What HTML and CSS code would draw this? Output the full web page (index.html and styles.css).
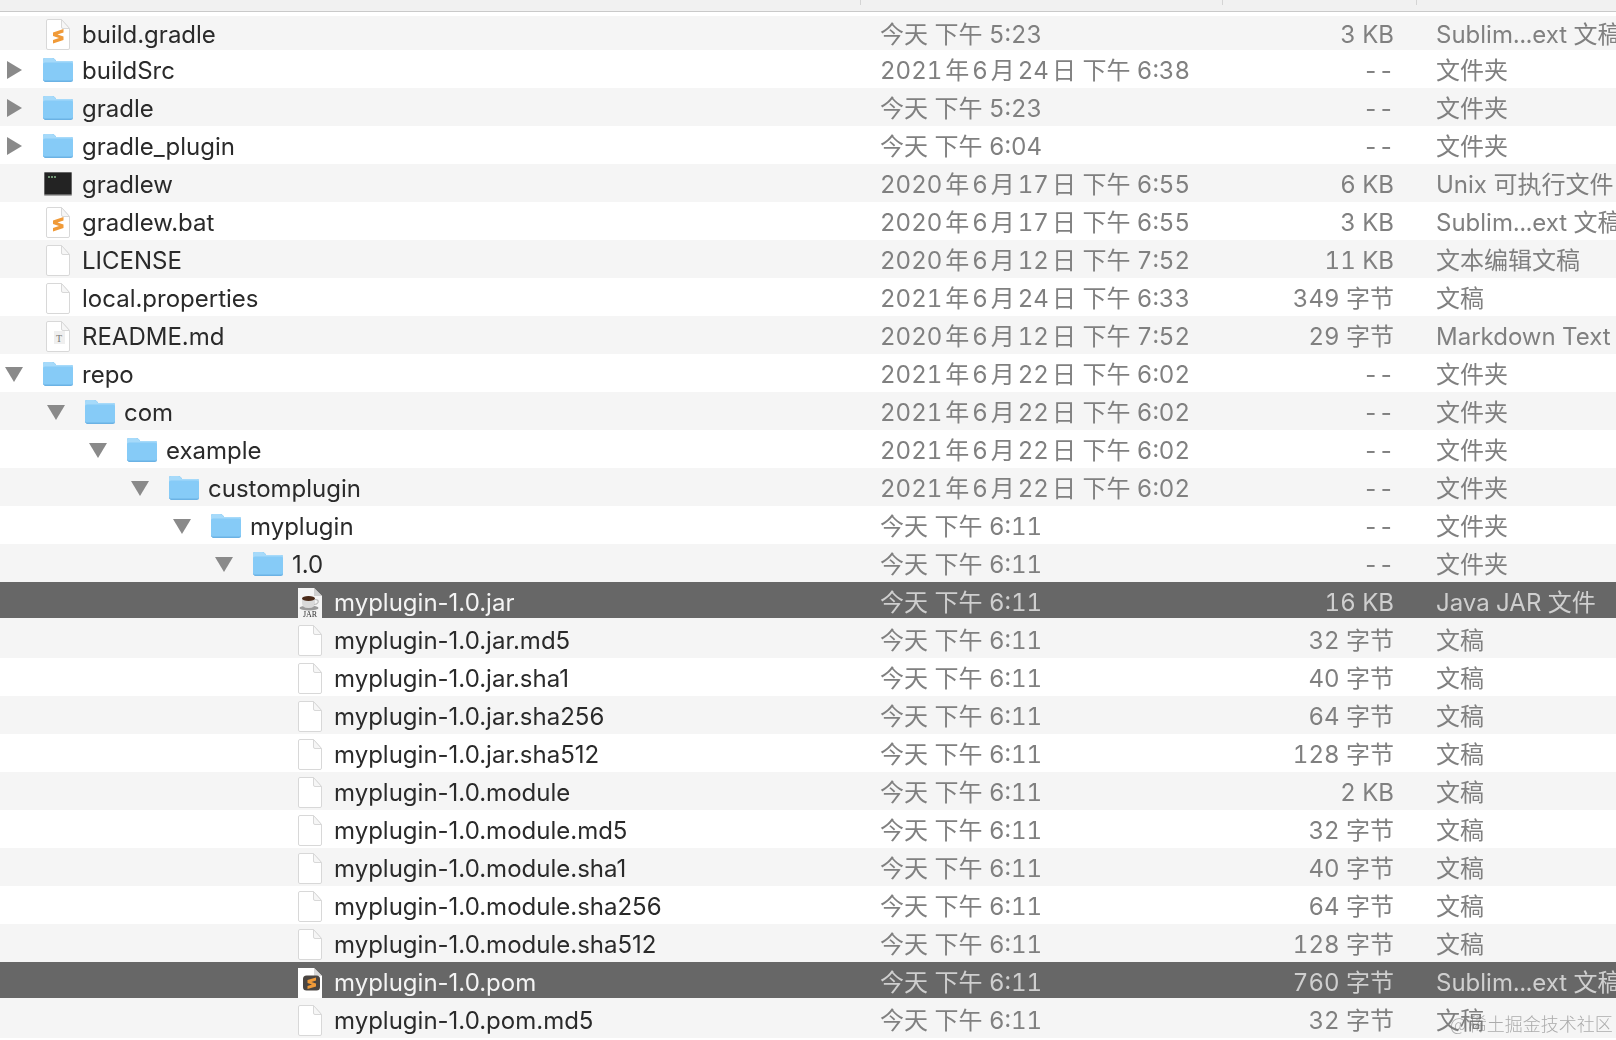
FILE: index.html
```html
<!DOCTYPE html>
<html lang="zh-CN">
<head>
    <meta charset="UTF-8">
    <meta name="viewport" content="width=device-width, initial-scale=1.0">
    <title>repo</title>
    <link rel="stylesheet" href="styles.css">
</head>
<body>
    <svg class="defs" width="0" height="0">
        <symbol id="i-folder" viewBox="0 0 30 24">
            <path d="M1 23 Q0 23 0 22 V2 Q0 0 2 0 H9 Q11 0 12 1.5 L13 3 H28 Q30 3 30 5 V22 Q30 24 28 24 H2 Q1 24 1 23Z" fill="#6bb2e4"/>
            <path d="M0 21 V2 Q0 0 2 0 H9 Q11 0 12 1.5 L13 3 H28 Q30 3 30 5 V21 Q30 22.5 28 22.5 H2 Q0 22.5 0 21Z" fill="#86cbf7"/>
            <path d="M0 6 Q0 4.5 2 4.5 H28 Q30 4.5 30 6 V5 Q30 3 28 3 H13 L12 1.5 Q11 0 9 0 H2 Q0 0 0 2Z" fill="#a6dafa"/>
        </symbol>
        <symbol id="i-file" viewBox="0 0 24 31">
            <path d="M.5 2 Q.5 .5 2 .5 H15.5 L23.5 9.5 V29 Q23.5 30.5 22 30.5 H2 Q.5 30.5 .5 29Z" fill="#fff" stroke="#d8d8d8"/>
            <path d="M15.5 .5 V8 Q15.5 9.5 17 9.5 H23.5Z" fill="#f6f6f6" stroke="#d8d8d8"/>
        </symbol>
        <symbol id="i-sublime" viewBox="0 0 24 31">
            <use href="#i-file"/>
            <path d="M7 13.5 L17.5 10 V13.5 L11.5 15.5 L17.5 17.5 V21 L7 24.5 V21 L13 19 L7 17Z" fill="#f09a38"/>
        </symbol>
        <symbol id="i-text" viewBox="0 0 24 31">
            <use href="#i-file"/>
            <rect x="8" y="10" width="11" height="13" fill="#efefef"/>
            <text x="13" y="20.5" class="t-mark">T</text>
        </symbol>
        <symbol id="i-term" viewBox="0 0 28 24">
            <rect x="0" y="0" width="28" height="24" rx="1" fill="#aaa"/>
            <rect x=".5" y=".5" width="27" height="22" fill="#232323"/>
            <path d="M4 5 H13" stroke="#8fbf92" stroke-width="1.5" stroke-dasharray="2 1"/>
        </symbol>
        <symbol id="i-jar" viewBox="0 0 24 31">
            <path d="M0 1 H16 L24 9 V31 H0Z" fill="#f4f4f4"/>
            <path d="M16 1 V9 H24Z" fill="#cfcfcf"/>
            <ellipse cx="11" cy="21" rx="9.5" ry="2.5" fill="#9a9a9a"/>
            <path d="M4 11 H17 V16 Q17 21 11 21 H10 Q4 21 4 16Z" fill="#d9d9d9"/>
            <ellipse cx="10.5" cy="11.5" rx="6.5" ry="2.5" fill="#4a2a18"/>
            <path d="M17 12.5 Q21 12.5 20 15.5 Q19 17.5 16 17.5" fill="none" stroke="#bbb" stroke-width="1.2"/>
            <text x="12" y="29.5" class="t-jar">JAR</text>
        </symbol>
        <symbol id="i-sublime-sel" viewBox="0 0 24 31">
            <path d="M0 1 H16 L24 9 V31 H0Z" fill="#fff"/>
            <path d="M16 1 V9 H24Z" fill="#d8d8d8"/>
            <rect x="5" y="8.5" width="17" height="15" rx="3.5" fill="#4a4541"/>
            <path d="M9.5 13 L18 10.5 V13.5 L13.5 15 L18 16.5 V19.5 L9.5 22 V19 L14 17.5 L9.5 16Z" fill="#f09a38"/>
        </symbol>
    </svg>

    <div class="header">
        <span class="sep"></span>
        <span class="sep"></span>
        <span class="sep"></span>
    </div>

    <div class="list">
        <div class="row first"><div class="name"><i class="twisty"></i><svg class="ic file"><use href="#i-sublime"/></svg><span>build.gradle</span></div><div class="date">今天 下午 5:23</div><div class="size">3 KB</div><div class="kind">Sublim...ext 文稿</div></div>
        <div class="row"><div class="name"><i class="twisty closed"></i><svg class="ic folder"><use href="#i-folder"/></svg><span>buildSrc</span></div><div class="date">2021年6月24日 下午 6:38</div><div class="size">--</div><div class="kind">文件夹</div></div>
        <div class="row"><div class="name"><i class="twisty closed"></i><svg class="ic folder"><use href="#i-folder"/></svg><span>gradle</span></div><div class="date">今天 下午 5:23</div><div class="size">--</div><div class="kind">文件夹</div></div>
        <div class="row"><div class="name"><i class="twisty closed"></i><svg class="ic folder"><use href="#i-folder"/></svg><span>gradle_plugin</span></div><div class="date">今天 下午 6:04</div><div class="size">--</div><div class="kind">文件夹</div></div>
        <div class="row"><div class="name"><i class="twisty"></i><svg class="ic term"><use href="#i-term"/></svg><span>gradlew</span></div><div class="date">2020年6月17日 下午 6:55</div><div class="size">6 KB</div><div class="kind">Unix 可执行文件</div></div>
        <div class="row"><div class="name"><i class="twisty"></i><svg class="ic file"><use href="#i-sublime"/></svg><span>gradlew.bat</span></div><div class="date">2020年6月17日 下午 6:55</div><div class="size">3 KB</div><div class="kind">Sublim...ext 文稿</div></div>
        <div class="row"><div class="name"><i class="twisty"></i><svg class="ic file"><use href="#i-file"/></svg><span>LICENSE</span></div><div class="date">2020年6月12日 下午 7:52</div><div class="size">11 KB</div><div class="kind">文本编辑文稿</div></div>
        <div class="row"><div class="name"><i class="twisty"></i><svg class="ic file"><use href="#i-file"/></svg><span>local.properties</span></div><div class="date">2021年6月24日 下午 6:33</div><div class="size">349 字节</div><div class="kind">文稿</div></div>
        <div class="row"><div class="name"><i class="twisty"></i><svg class="ic file"><use href="#i-text"/></svg><span>README.md</span></div><div class="date">2020年6月12日 下午 7:52</div><div class="size">29 字节</div><div class="kind">Markdown Text</div></div>
        <div class="row"><div class="name"><i class="twisty open"></i><svg class="ic folder"><use href="#i-folder"/></svg><span>repo</span></div><div class="date">2021年6月22日 下午 6:02</div><div class="size">--</div><div class="kind">文件夹</div></div>
        <div class="row"><div class="name l1"><i class="twisty open"></i><svg class="ic folder"><use href="#i-folder"/></svg><span>com</span></div><div class="date">2021年6月22日 下午 6:02</div><div class="size">--</div><div class="kind">文件夹</div></div>
        <div class="row"><div class="name l2"><i class="twisty open"></i><svg class="ic folder"><use href="#i-folder"/></svg><span>example</span></div><div class="date">2021年6月22日 下午 6:02</div><div class="size">--</div><div class="kind">文件夹</div></div>
        <div class="row"><div class="name l3"><i class="twisty open"></i><svg class="ic folder"><use href="#i-folder"/></svg><span>customplugin</span></div><div class="date">2021年6月22日 下午 6:02</div><div class="size">--</div><div class="kind">文件夹</div></div>
        <div class="row"><div class="name l4"><i class="twisty open"></i><svg class="ic folder"><use href="#i-folder"/></svg><span>myplugin</span></div><div class="date">今天 下午 6:11</div><div class="size">--</div><div class="kind">文件夹</div></div>
        <div class="row"><div class="name l5"><i class="twisty open"></i><svg class="ic folder"><use href="#i-folder"/></svg><span>1.0</span></div><div class="date">今天 下午 6:11</div><div class="size">--</div><div class="kind">文件夹</div></div>
        <div class="row selected"><div class="name l6"><i class="twisty"></i><svg class="ic file"><use href="#i-jar"/></svg><span>myplugin-1.0.jar</span></div><div class="date">今天 下午 6:11</div><div class="size">16 KB</div><div class="kind">Java JAR 文件</div></div>
        <div class="row"><div class="name l6"><i class="twisty"></i><svg class="ic file"><use href="#i-file"/></svg><span>myplugin-1.0.jar.md5</span></div><div class="date">今天 下午 6:11</div><div class="size">32 字节</div><div class="kind">文稿</div></div>
        <div class="row"><div class="name l6"><i class="twisty"></i><svg class="ic file"><use href="#i-file"/></svg><span>myplugin-1.0.jar.sha1</span></div><div class="date">今天 下午 6:11</div><div class="size">40 字节</div><div class="kind">文稿</div></div>
        <div class="row"><div class="name l6"><i class="twisty"></i><svg class="ic file"><use href="#i-file"/></svg><span>myplugin-1.0.jar.sha256</span></div><div class="date">今天 下午 6:11</div><div class="size">64 字节</div><div class="kind">文稿</div></div>
        <div class="row"><div class="name l6"><i class="twisty"></i><svg class="ic file"><use href="#i-file"/></svg><span>myplugin-1.0.jar.sha512</span></div><div class="date">今天 下午 6:11</div><div class="size">128 字节</div><div class="kind">文稿</div></div>
        <div class="row"><div class="name l6"><i class="twisty"></i><svg class="ic file"><use href="#i-file"/></svg><span>myplugin-1.0.module</span></div><div class="date">今天 下午 6:11</div><div class="size">2 KB</div><div class="kind">文稿</div></div>
        <div class="row"><div class="name l6"><i class="twisty"></i><svg class="ic file"><use href="#i-file"/></svg><span>myplugin-1.0.module.md5</span></div><div class="date">今天 下午 6:11</div><div class="size">32 字节</div><div class="kind">文稿</div></div>
        <div class="row"><div class="name l6"><i class="twisty"></i><svg class="ic file"><use href="#i-file"/></svg><span>myplugin-1.0.module.sha1</span></div><div class="date">今天 下午 6:11</div><div class="size">40 字节</div><div class="kind">文稿</div></div>
        <div class="row"><div class="name l6"><i class="twisty"></i><svg class="ic file"><use href="#i-file"/></svg><span>myplugin-1.0.module.sha256</span></div><div class="date">今天 下午 6:11</div><div class="size">64 字节</div><div class="kind">文稿</div></div>
        <div class="row"><div class="name l6"><i class="twisty"></i><svg class="ic file"><use href="#i-file"/></svg><span>myplugin-1.0.module.sha512</span></div><div class="date">今天 下午 6:11</div><div class="size">128 字节</div><div class="kind">文稿</div></div>
        <div class="row selected"><div class="name l6"><i class="twisty"></i><svg class="ic file"><use href="#i-sublime-sel"/></svg><span>myplugin-1.0.pom</span></div><div class="date">今天 下午 6:11</div><div class="size">760 字节</div><div class="kind">Sublim...ext 文稿</div></div>
        <div class="row"><div class="name l6"><i class="twisty"></i><svg class="ic file"><use href="#i-file"/></svg><span>myplugin-1.0.pom.md5</span></div><div class="date">今天 下午 6:11</div><div class="size">32 字节</div><div class="kind">文稿</div></div>
    </div>

    <div class="watermark">@稀土掘金技术社区</div>
</body>
</html>
```

FILE: styles.css
```css
html, body {
    margin: 0;
    height: 1040px;
    overflow: hidden;
    background: #fff;
}
body {
    position: relative;
    font-family: Inter, "Noto Sans CJK SC", sans-serif;
    font-size: 24px;
    color: #2a2a2a;
    text-autospace: normal;
}
.defs {
    position: absolute;
}
.t-mark {
    font-family: "Liberation Serif", serif;
    font-size: 10px;
    text-anchor: middle;
    fill: #777;
}
.t-jar {
    font-family: "Liberation Serif", serif;
    font-size: 8px;
    text-anchor: middle;
    fill: #333;
}

/* column header, only its bottom edge is in view */
.header {
    display: grid;
    grid-template-columns: 861px 362px 194px;
    height: 11px;
    background: #f1f1f1;
    border-bottom: 1px solid #c9c9c9;
}
.sep {
    height: 5px;
    border-right: 1px solid #d4d4d4;
}

.list {
    overflow: hidden;
    filter: blur(0.35px);
}
.row {
    display: grid;
    grid-template-columns: 861px 362px 171px 1fr;
    align-items: center;
    height: 38px;
    line-height: 38px;
    white-space: nowrap;
    overflow: hidden;
}
.row:nth-child(odd) {
    background: #f5f5f5;
}
.row.first {
    background: linear-gradient(#fff 4px, #f5f5f5 4px);
    padding-top: 2px;
    height: 36px;
}
.row.selected {
    height: 36px;
    margin-bottom: 2px;
    background: #676767;
    color: #f4f4f4;
}
.row.selected + .row {
    margin-top: -2px;
    height: 40px;
    padding-top: 2px;
    box-sizing: border-box;
}

.name {
    display: flex;
    align-items: center;
    height: 100%;
}
.name span {
    padding-top: 2px;
}
.l1 { padding-left: 42px; }
.l2 { padding-left: 84px; }
.l3 { padding-left: 126px; }
.l4 { padding-left: 168px; }
.l5 { padding-left: 210px; }
.l6 { padding-left: 252px; }

.twisty {
    flex: none;
    width: 43px;
    height: 19px;
    box-sizing: border-box;
}
.twisty.closed::before,
.twisty.open::before {
    content: "";
    display: block;
    width: 0;
    height: 0;
}
.twisty.closed::before {
    margin-left: 7px;
    border-left: 15px solid #8a8a8a;
    border-top: 9px solid transparent;
    border-bottom: 9px solid transparent;
}
.twisty.open::before {
    margin-left: 5px;
    margin-top: 2px;
    border-top: 15px solid #8a8a8a;
    border-left: 9px solid transparent;
    border-right: 9px solid transparent;
}

.ic {
    flex: none;
}
.folder {
    width: 30px;
    height: 24px;
    margin-right: 9px;
}
.file {
    width: 24px;
    height: 31px;
    margin-left: 3px;
    margin-right: 12px;
}
.term {
    width: 28px;
    height: 24px;
    margin-left: 1px;
    margin-right: 10px;
}

.date,
.size,
.kind {
    color: #808080;
    padding-top: 2px;
    font-feature-settings: "tnum";
}
.selected .date,
.selected .size,
.selected .kind {
    color: #cfcfcf;
}
.date {
    padding-left: 19px;
}
.size {
    text-align: right;
}
.kind {
    padding-left: 42px;
}

.watermark {
    position: absolute;
    left: 1450px;
    top: 1011px;
    font-size: 18px;
    line-height: 24px;
    color: rgba(110, 110, 110, 0.55);
    font-family: "Noto Sans CJK SC", sans-serif;
    font-weight: 300;
}
```
